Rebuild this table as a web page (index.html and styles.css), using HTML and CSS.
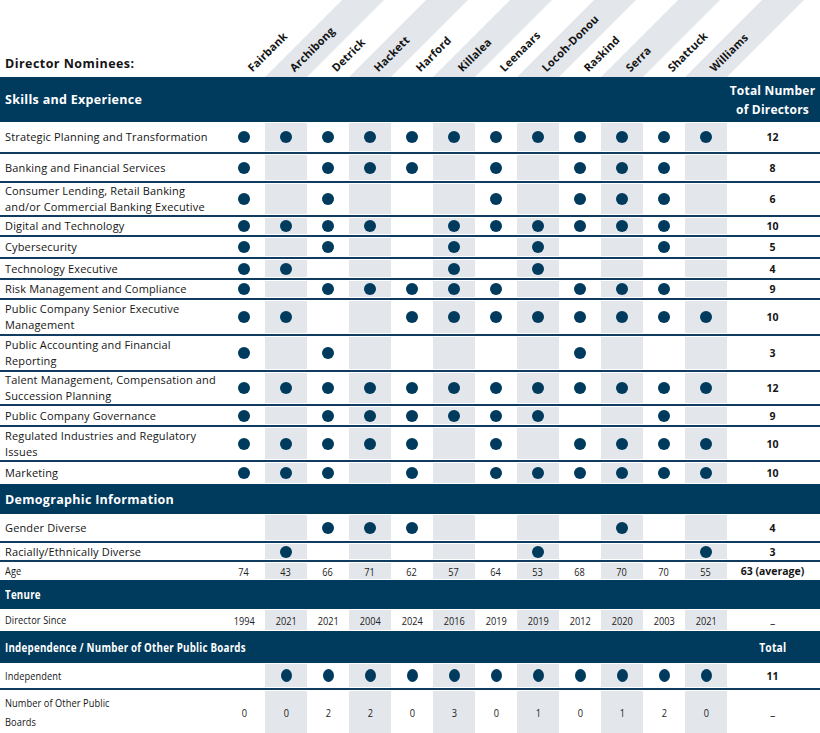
FILE: index.html
```html
<!DOCTYPE html>
<html lang="en">
<head>
<meta charset="utf-8">
<title>Director Nominees</title>
<link rel="stylesheet" href="styles.css">
</head>
<body>
<div class="matrix">
  <div class="names">
    <div class="nom-title">Director Nominees:</div>
    <div class="name"><span>Fairbank</span></div>
    <div class="name alt"><span>Archibong</span></div>
    <div class="name"><span>Detrick</span></div>
    <div class="name alt"><span>Hackett</span></div>
    <div class="name"><span>Harford</span></div>
    <div class="name alt"><span>Killalea</span></div>
    <div class="name"><span>Leenaars</span></div>
    <div class="name alt"><span>Locoh-Donou</span></div>
    <div class="name"><span>Raskind</span></div>
    <div class="name alt"><span>Serra</span></div>
    <div class="name"><span>Shattuck</span></div>
    <div class="name alt"><span>Williams</span></div>
    <div></div>
  </div>

  <div class="band">
    <div class="band-title">Skills and Experience</div>
    <div class="band-total">Total Number<br>of Directors</div>
  </div>

  <div class="row"><div class="lab">Strategic Planning and Transformation</div><span class="c"><i></i></span><span class="c"><i></i></span><span class="c"><i></i></span><span class="c"><i></i></span><span class="c"><i></i></span><span class="c"><i></i></span><span class="c"><i></i></span><span class="c"><i></i></span><span class="c"><i></i></span><span class="c"><i></i></span><span class="c"><i></i></span><span class="c"><i></i></span><span class="tot">12</span></div>

  <div class="row"><div class="lab">Banking and Financial Services</div><span class="c"><i></i></span><span class="c"></span><span class="c"><i></i></span><span class="c"><i></i></span><span class="c"><i></i></span><span class="c"></span><span class="c"><i></i></span><span class="c"></span><span class="c"><i></i></span><span class="c"><i></i></span><span class="c"><i></i></span><span class="c"></span><span class="tot">8</span></div>

  <div class="row"><div class="lab">Consumer Lending, Retail Banking<br>and/or Commercial Banking Executive</div><span class="c"><i></i></span><span class="c"></span><span class="c"><i></i></span><span class="c"></span><span class="c"></span><span class="c"></span><span class="c"><i></i></span><span class="c"></span><span class="c"><i></i></span><span class="c"><i></i></span><span class="c"><i></i></span><span class="c"></span><span class="tot">6</span></div>

  <div class="row"><div class="lab">Digital and Technology</div><span class="c"><i></i></span><span class="c"><i></i></span><span class="c"><i></i></span><span class="c"><i></i></span><span class="c"></span><span class="c"><i></i></span><span class="c"><i></i></span><span class="c"><i></i></span><span class="c"><i></i></span><span class="c"><i></i></span><span class="c"><i></i></span><span class="c"></span><span class="tot">10</span></div>

  <div class="row"><div class="lab">Cybersecurity</div><span class="c"><i></i></span><span class="c"></span><span class="c"><i></i></span><span class="c"></span><span class="c"></span><span class="c"><i></i></span><span class="c"></span><span class="c"><i></i></span><span class="c"></span><span class="c"></span><span class="c"><i></i></span><span class="c"></span><span class="tot">5</span></div>

  <div class="row"><div class="lab">Technology Executive</div><span class="c"><i></i></span><span class="c"><i></i></span><span class="c"></span><span class="c"></span><span class="c"></span><span class="c"><i></i></span><span class="c"></span><span class="c"><i></i></span><span class="c"></span><span class="c"></span><span class="c"></span><span class="c"></span><span class="tot">4</span></div>

  <div class="row"><div class="lab">Risk Management and Compliance</div><span class="c"><i></i></span><span class="c"></span><span class="c"><i></i></span><span class="c"><i></i></span><span class="c"><i></i></span><span class="c"><i></i></span><span class="c"><i></i></span><span class="c"></span><span class="c"><i></i></span><span class="c"><i></i></span><span class="c"><i></i></span><span class="c"></span><span class="tot">9</span></div>

  <div class="row"><div class="lab">Public Company Senior Executive<br>Management</div><span class="c"><i></i></span><span class="c"><i></i></span><span class="c"></span><span class="c"></span><span class="c"><i></i></span><span class="c"><i></i></span><span class="c"><i></i></span><span class="c"><i></i></span><span class="c"><i></i></span><span class="c"><i></i></span><span class="c"><i></i></span><span class="c"><i></i></span><span class="tot">10</span></div>

  <div class="row"><div class="lab">Public Accounting and Financial<br>Reporting</div><span class="c"><i></i></span><span class="c"></span><span class="c"><i></i></span><span class="c"></span><span class="c"></span><span class="c"></span><span class="c"></span><span class="c"></span><span class="c"><i></i></span><span class="c"></span><span class="c"></span><span class="c"></span><span class="tot">3</span></div>

  <div class="row"><div class="lab">Talent Management, Compensation and<br>Succession Planning</div><span class="c"><i></i></span><span class="c"><i></i></span><span class="c"><i></i></span><span class="c"><i></i></span><span class="c"><i></i></span><span class="c"><i></i></span><span class="c"><i></i></span><span class="c"><i></i></span><span class="c"><i></i></span><span class="c"><i></i></span><span class="c"><i></i></span><span class="c"><i></i></span><span class="tot">12</span></div>

  <div class="row"><div class="lab">Public Company Governance</div><span class="c"><i></i></span><span class="c"></span><span class="c"><i></i></span><span class="c"><i></i></span><span class="c"><i></i></span><span class="c"><i></i></span><span class="c"><i></i></span><span class="c"><i></i></span><span class="c"></span><span class="c"></span><span class="c"><i></i></span><span class="c"></span><span class="tot">9</span></div>

  <div class="row"><div class="lab">Regulated Industries and Regulatory<br>Issues</div><span class="c"><i></i></span><span class="c"><i></i></span><span class="c"><i></i></span><span class="c"><i></i></span><span class="c"><i></i></span><span class="c"></span><span class="c"><i></i></span><span class="c"></span><span class="c"><i></i></span><span class="c"><i></i></span><span class="c"><i></i></span><span class="c"><i></i></span><span class="tot">10</span></div>

  <div class="row last"><div class="lab">Marketing</div><span class="c"><i></i></span><span class="c"><i></i></span><span class="c"><i></i></span><span class="c"></span><span class="c"><i></i></span><span class="c"></span><span class="c"><i></i></span><span class="c"><i></i></span><span class="c"><i></i></span><span class="c"><i></i></span><span class="c"><i></i></span><span class="c"><i></i></span><span class="tot">10</span></div>

  <div class="band">
    <div class="band-title">Demographic Information</div>
  </div>

  <div class="row"><div class="lab">Gender Diverse</div><span class="c"></span><span class="c"></span><span class="c"><i></i></span><span class="c"><i></i></span><span class="c"><i></i></span><span class="c"></span><span class="c"></span><span class="c"></span><span class="c"></span><span class="c"><i></i></span><span class="c"></span><span class="c"></span><span class="tot">4</span></div>

  <div class="row"><div class="lab">Racially/Ethnically Diverse</div><span class="c"></span><span class="c"><i></i></span><span class="c"></span><span class="c"></span><span class="c"></span><span class="c"></span><span class="c"></span><span class="c"><i></i></span><span class="c"></span><span class="c"></span><span class="c"></span><span class="c"><i></i></span><span class="tot">3</span></div>

  <div class="row last num"><div class="lab small"><span class="cond">Age</span></div><span class="c"><span class="cn">74</span></span><span class="c"><span class="cn">43</span></span><span class="c"><span class="cn">66</span></span><span class="c"><span class="cn">71</span></span><span class="c"><span class="cn">62</span></span><span class="c"><span class="cn">57</span></span><span class="c"><span class="cn">64</span></span><span class="c"><span class="cn">53</span></span><span class="c"><span class="cn">68</span></span><span class="c"><span class="cn">70</span></span><span class="c"><span class="cn">70</span></span><span class="c"><span class="cn">55</span></span><span class="tot">63 (average)</span></div>

  <div class="band">
    <div class="band-title"><span class="cond">Tenure</span></div>
  </div>

  <div class="row last num"><div class="lab small"><span class="cond">Director Since</span></div><span class="c"><span class="cn">1994</span></span><span class="c"><span class="cn">2021</span></span><span class="c"><span class="cn">2021</span></span><span class="c"><span class="cn">2004</span></span><span class="c"><span class="cn">2024</span></span><span class="c"><span class="cn">2016</span></span><span class="c"><span class="cn">2019</span></span><span class="c"><span class="cn">2019</span></span><span class="c"><span class="cn">2012</span></span><span class="c"><span class="cn">2020</span></span><span class="c"><span class="cn">2003</span></span><span class="c"><span class="cn">2021</span></span><span class="tot"><span class="dash">–</span></span></div>

  <div class="band">
    <div class="band-title"><span class="cond">Independence / Number of Other Public Boards</span></div>
    <div class="band-total"><span class="cond mid">Total</span></div>
  </div>

  <div class="row"><div class="lab small"><span class="cond">Independent</span></div><span class="c"></span><span class="c"><i class="oval"></i></span><span class="c"><i class="oval"></i></span><span class="c"><i class="oval"></i></span><span class="c"><i class="oval"></i></span><span class="c"><i class="oval"></i></span><span class="c"><i class="oval"></i></span><span class="c"><i class="oval"></i></span><span class="c"><i class="oval"></i></span><span class="c"><i class="oval"></i></span><span class="c"><i class="oval"></i></span><span class="c"><i class="oval"></i></span><span class="tot">11</span></div>

  <div class="row last num end"><div class="lab small tall"><span class="cond">Number of Other Public<br>Boards</span></div><span class="c"><span class="cn">0</span></span><span class="c"><span class="cn">0</span></span><span class="c"><span class="cn">2</span></span><span class="c"><span class="cn">2</span></span><span class="c"><span class="cn">0</span></span><span class="c"><span class="cn">3</span></span><span class="c"><span class="cn">0</span></span><span class="c"><span class="cn">1</span></span><span class="c"><span class="cn">0</span></span><span class="c"><span class="cn">1</span></span><span class="c"><span class="cn">2</span></span><span class="c"><span class="cn">0</span></span><span class="tot"><span class="dash">–</span></span></div>
</div>
</body>
</html>
```

FILE: styles.css
```css
html, body {
  margin: 0;
  padding: 0;
  background: #ffffff;
}

body {
  font-family: "Open Sans", "Noto Sans", sans-serif;
  color: #151515;
  width: 820px;
  overflow: hidden;
}

.matrix {
  display: grid;
  width: 820px;
  grid-template-rows: 77px 45px 32px 29px 34px 20px 22px 21px 20px 36px 36px 34px 21px 35px 22px 30px 29px 19px 18px 29px 22px 32px 27px 43px;
}

.names,
.band,
.row {
  display: grid;
  grid-template-columns: 223px repeat(12, 42px) 93px;
  box-sizing: border-box;
}

/* header with slanted names */
.nom-title {
  align-self: end;
  padding: 0 0 5px 5px;
  font-weight: 700;
  font-size: 12.5px;
  letter-spacing: 0.45px;
  line-height: 16px;
  white-space: nowrap;
}

.name {
  position: relative;
}

.name.alt::before {
  content: "";
  position: absolute;
  inset: 0;
  background: #e3e7eb;
  transform-origin: left bottom;
  transform: skewX(-45deg);
}

.name span {
  position: absolute;
  left: 31px;
  bottom: 3px;
  transform-origin: left bottom;
  transform: rotate(-45deg);
  white-space: nowrap;
  font-weight: 700;
  font-size: 11px;
  line-height: 12px;
  letter-spacing: 0.2px;
}

/* navy section bands */
.band {
  background: #003a5d;
  color: #ffffff;
  font-weight: 700;
  align-items: center;
}

.band-title {
  grid-column: 1 / 14;
  padding-left: 5px;
  font-size: 12.5px;
  letter-spacing: 0.3px;
  white-space: nowrap;
}

.band-total {
  grid-column: 14;
  text-align: center;
  font-size: 12px;
  letter-spacing: 0.2px;
  line-height: 19px;
  padding-right: 2px;
  white-space: nowrap;
}

.cond {
  display: inline-block;
  transform: scaleX(0.78);
  transform-origin: left center;
}

.cond.mid {
  transform: scaleX(0.86);
  transform-origin: center center;
}

/* data rows */
.row {
  border-bottom: 2px solid #0f3c60;
}

.row.last {
  border-bottom: none;
}

.lab {
  display: flex;
  align-items: center;
  padding-left: 5px;
  font-size: 11px;
  line-height: 16px;
  letter-spacing: 0.15px;
  white-space: nowrap;
}

.lab.small {
  font-size: 11px;
  letter-spacing: 0.1px;
}

.lab.small .cond {
  transform: scaleX(0.84);
}

.lab.tall {
  line-height: 19px;
}

.c {
  display: flex;
  align-items: center;
  justify-content: center;
  margin: 1px 0;
}

.row > .c:nth-child(2n+3) {
  background: #e3e7eb;
}

.row.end > .c {
  margin-bottom: 0;
}

.c i {
  display: block;
  width: 12px;
  height: 12px;
  border-radius: 50%;
  background: #003a5d;
}

.c i.oval {
  width: 11px;
  height: 13px;
}

.cn {
  display: inline-block;
  font-size: 11.5px;
  color: #222;
  transform: scaleX(0.8);
}

.tot {
  display: flex;
  align-items: center;
  justify-content: center;
  font-weight: 700;
  font-size: 10.5px;
  padding-right: 2px;
  white-space: nowrap;
}

.dash {
  display: inline-block;
  font-weight: 400;
  transform: translateY(3px);
}
```
